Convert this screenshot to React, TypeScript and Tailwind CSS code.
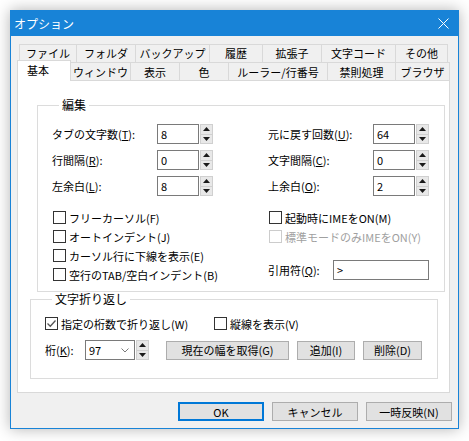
import type { ReactNode } from 'react';

const FONT = "font-['Noto_Sans_CJK_JP','Noto_Sans',sans-serif]";

const TOP_TABS: [string, number][] = [
  ['ファイル', 57],
  ['フォルダ', 59],
  ['バックアップ', 74],
  ['履歴', 53],
  ['拡張子', 59],
  ['文字コード', 74],
  ['その他', 53],
];

const FRONT_TABS: [string, number][] = [
  ['ウィンドウ', 59],
  ['表示', 49],
  ['色', 49],
  ['ルーラー/行番号', 99],
  ['禁則処理', 68],
  ['ブラウザ', 55],
];

function Spinner() {
  return (
    <div className="ml-px flex h-[20px] w-[13px] flex-col border border-[#d0d0d0] bg-[#e8e8e8]">
      <div className="flex flex-1 items-center justify-center border-b border-[#d0d0d0]">
        <svg width="7" height="4" viewBox="0 0 7 4">
          <path d="M0 4 L3.5 0 L7 4Z" fill="#1a1a1a" />
        </svg>
      </div>
      <div className="flex flex-1 items-center justify-center">
        <svg width="7" height="4" viewBox="0 0 7 4">
          <path d="M0 0 L3.5 4 L7 0Z" fill="#1a1a1a" />
        </svg>
      </div>
    </div>
  );
}

function Mn({ k }: { k: string }) {
  return (
    <>
      (<span className="underline underline-offset-[1px]">{k}</span>):
    </>
  );
}

function NumRow({ label, k, value }: { label: string; k: string; value: string }) {
  return (
    <div className="flex h-[20px] items-center">
      <span className="w-[105px]">
        {label}
        <Mn k={k} />
      </span>
      <div className="flex h-[20px] w-[42px] items-center border border-[#7a7a7a] bg-white pl-[3px]">
        {value}
      </div>
      <Spinner />
    </div>
  );
}

function Check({
  label,
  checked,
  disabled,
  className,
}: {
  label: string;
  checked?: boolean;
  disabled?: boolean;
  className?: string;
}) {
  return (
    <div className={`flex h-[19px] items-center ${className ?? ''}`}>
      <span
        className={`flex h-[13px] w-[13px] items-center justify-center border bg-white ${
          disabled ? 'border-[#cccccc]' : 'border-[#333333]'
        }`}
      >
        {checked ? (
          <svg width="11" height="11" viewBox="0 0 11 11">
            <path d="M1.5 5.5 L4.3 8.3 L9.5 2.5" fill="none" stroke="#555" strokeWidth="1.3" />
          </svg>
        ) : null}
      </span>
      <span className={`ml-[3px] ${disabled ? 'text-[#a0a0a0]' : ''}`}>{label}</span>
    </div>
  );
}

function Btn({ children, w, primary }: { children: ReactNode; w: string; primary?: boolean }) {
  return (
    <div
      className={`flex h-[19px] items-center justify-center bg-[#e1e1e1] ${w} ${
        primary ? 'border-2 border-[#0078d7]' : 'border border-[#adadad]'
      }`}
    >
      {children}
    </div>
  );
}

export default function App() {
  return (
    <div className={`h-[441px] w-[469px] bg-white pl-[10px] pt-[10px] text-[11px] leading-[14px] text-black ${FONT}`}>
      <div className="flex h-[419px] w-[449px] flex-col border border-[#1883d7] bg-[#f0f0f0] shadow-[0_0_14px_rgba(0,0,0,0.3)]">
        {/* title bar */}
        <div className="flex h-[25px] items-center justify-between bg-[#1883d7] pl-[3px] pr-[9px] text-[12px] text-white">
          <span>オプション</span>
          <svg width="11" height="11" viewBox="0 0 11 11">
            <path d="M0.5 0.5 L10.5 10.5 M10.5 0.5 L0.5 10.5" stroke="#fff" strokeWidth="1" />
          </svg>
        </div>

        <div className="flex flex-col pl-[6px] pt-[8px]">
          {/* back tab row */}
          <div className="ml-[2px] flex h-[18px]">
            {TOP_TABS.map(([t, w], i) => (
              <div
                key={t}
                style={{ width: w }}
                className={`flex items-center justify-center border-l border-t border-[#d9d9d9] pb-[1px] ${
                  i === TOP_TABS.length - 1 ? 'border-r' : ''
                }`}
              >
                {t}
              </div>
            ))}
          </div>
          {/* front tab row */}
          <div className="-mt-[2px] flex h-[20px] items-end">
            <div className="relative z-10 -mb-px flex h-[21px] w-[54px] items-center border-x border-t border-[#d9d9d9] bg-white pb-[3px] pl-[9px]">
              基本
            </div>
            {FRONT_TABS.map(([t, w], i) => (
              <div
                key={t}
                style={{ width: w }}
                className={`flex h-[18px] items-center justify-center border-t border-[#d9d9d9] ${
                  i === 0 ? '' : 'border-l'
                } ${i === FRONT_TABS.length - 1 ? 'border-r' : ''}`}
              >
                {t}
              </div>
            ))}
          </div>

          {/* panel */}
          <div className="h-[313px] w-[433px] border border-[#d9d9d9] bg-white">
            <fieldset className="ml-[19px] mt-[17px] h-[194px] w-[408px] border border-[#dcdcdc] pl-[14px] pt-[12px]">
              <legend className="ml-[7px] px-[3px] text-[12px] leading-[14px]">編集</legend>
              <div className="grid grid-cols-[216px_1fr] gap-y-[6px]">
                <NumRow label="タブの文字数" k="T" value="8" />
                <NumRow label="元に戻す回数" k="U" value="64" />
                <NumRow label="行間隔" k="R" value="0" />
                <NumRow label="文字間隔" k="C" value="0" />
                <NumRow label="左余白" k="L" value="8" />
                <NumRow label="上余白" k="O" value="2" />
              </div>
              <div className="mt-[12px] grid grid-cols-[216px_1fr]">
                <div className="flex flex-col">
                  <Check className="ml-px" label="フリーカーソル(F)" />
                  <Check className="ml-px" label="オートインデント(J)" />
                  <Check className="ml-px" label="カーソル行に下線を表示(E)" />
                  <Check className="ml-px" label="空行のTAB/空白インデント(B)" />
                </div>
                <div className="flex flex-col">
                  <Check className="ml-px" label="起動時にIMEをON(M)" />
                  <Check className="ml-px" label="標準モードのみIMEをON(Y)" disabled />
                  <div className="mt-[14px] flex h-[20px] items-center">
                    <span className="w-[65px]">
                      引用符
                      <Mn k="Q" />
                    </span>
                    <div className="flex h-[20px] w-[96px] items-center border border-[#7a7a7a] bg-white pl-[3px]">
                      &gt;
                    </div>
                  </div>
                </div>
              </div>
            </fieldset>

            <fieldset className="ml-[12px] h-[87px] w-[408px] border border-[#dcdcdc] pl-[14px] pt-[8px]">
              <legend className="ml-[7px] px-[3px] text-[12px] leading-[14px]">文字折り返し</legend>
              <div className="flex">
                <Check className="w-[169px]" label="指定の桁数で折り返し(W)" checked />
                <Check label="縦線を表示(V)" />
              </div>
              <div className="mt-[7px] flex h-[20px] items-center">
                <span className="w-[40px]">
                  桁
                  <Mn k="K" />
                </span>
                <div className="flex h-[20px] w-[50px] items-center justify-between border border-[#7a7a7a] bg-white pl-[3px] pr-[5px]">
                  <span>97</span>
                  <svg width="8" height="5" viewBox="0 0 8 5">
                    <path d="M0.5 0.5 L4 4 L7.5 0.5" fill="none" stroke="#7a7a7a" strokeWidth="1" />
                  </svg>
                </div>
                <Spinner />
                <div className="ml-[17px] flex gap-[8px]">
                  <Btn w="w-[123px]">現在の幅を取得(G)</Btn>
                  <Btn w="w-[58px]">追加(I)</Btn>
                  <Btn w="w-[59px]">削除(D)</Btn>
                </div>
              </div>
            </fieldset>
          </div>

          {/* dialog buttons */}
          <div className="mt-[9px] flex justify-end gap-[8px] pr-[6px]">
            <Btn w="w-[86px]" primary>
              OK
            </Btn>
            <Btn w="w-[86px]">キャンセル</Btn>
            <Btn w="w-[86px]">一時反映(N)</Btn>
          </div>
        </div>
      </div>
    </div>
  );
}
